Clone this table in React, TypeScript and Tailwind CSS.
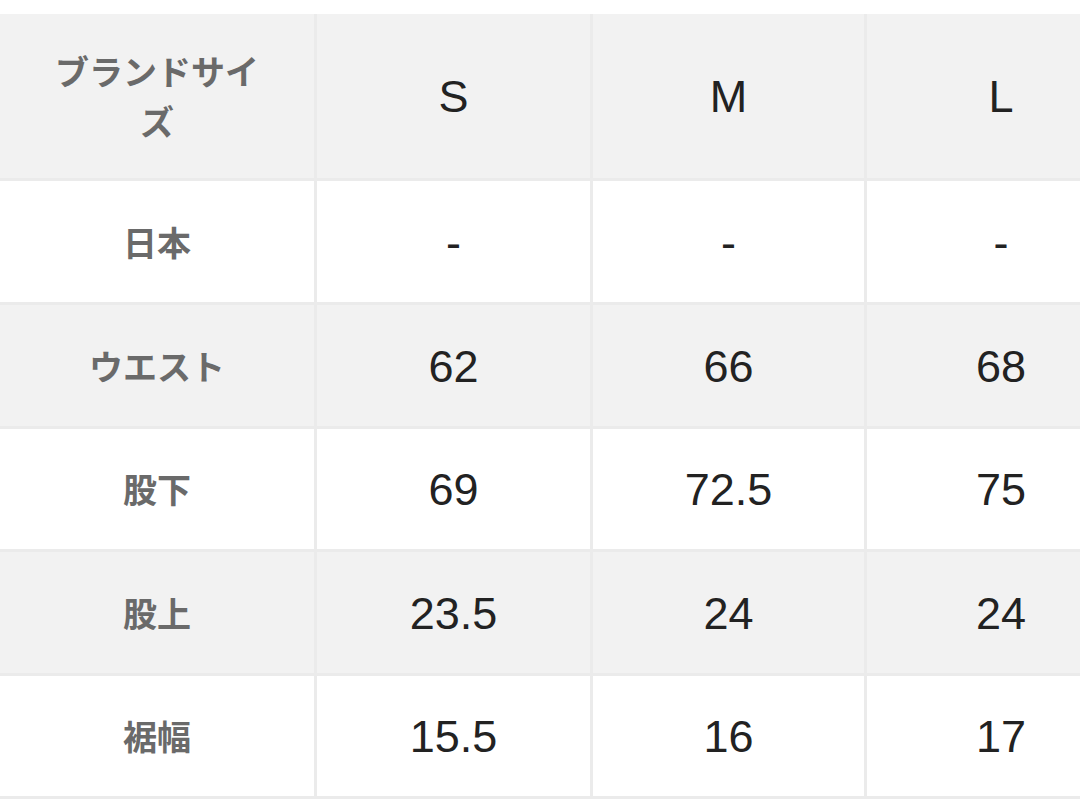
import React from "react";

interface SizeRow {
  label: string;
  values: string[];
  shaded: boolean;
  height: string;
}

const sizes = ["S", "M", "L"];

const rows: SizeRow[] = [
  { label: "日本", values: ["-", "-", "-"], shaded: false, height: "h-[121px]" },
  { label: "ウエスト", values: ["62", "66", "68"], shaded: true, height: "h-[121px]" },
  { label: "股下", values: ["69", "72.5", "75"], shaded: false, height: "h-[120px]" },
  { label: "股上", values: ["23.5", "24", "24"], shaded: true, height: "h-[121px]" },
  { label: "裾幅", values: ["15.5", "16", "17"], shaded: false, height: "h-[120px]" },
];

const labelFont = {
  fontFamily: '"Noto Sans CJK JP", "Noto Sans", sans-serif',
};
const valueFont = {
  fontFamily: '"Liberation Sans", Arial, sans-serif',
};

const LabelCell: React.FC<{ text: string; shaded: boolean; height: string }> = ({
  text,
  shaded,
  height,
}) => (
  <div
    className={
      "flex items-center justify-center px-[45px] text-center text-[34px] leading-[50px] font-bold text-[#6a6a6a] " +
      height +
      " " +
      (shaded ? "bg-[#f2f2f2]" : "bg-white")
    }
    style={labelFont}
  >
    {text}
  </div>
);

const ValueCell: React.FC<{ text: string; shaded: boolean; height: string }> = ({
  text,
  shaded,
  height,
}) => (
  <div
    className={
      "flex items-center justify-center pt-[2px] text-[45px] text-[#222222] " +
      height +
      " " +
      (shaded ? "bg-[#f2f2f2]" : "bg-white")
    }
    style={valueFont}
  >
    {text}
  </div>
);

export default function App() {
  return (
    <div className="w-[1080px] h-[812px] overflow-hidden bg-white pt-[14px]">
      <div className="grid w-[1135px] grid-cols-[314px_273px_271px_268px] gap-[3px] bg-[#ebebeb] pb-[3px]">
        <LabelCell text="ブランドサイズ" shaded={true} height="h-[164px]" />
        {sizes.map((s) => (
          <ValueCell key={s} text={s} shaded={true} height="h-[164px]" />
        ))}
        {rows.map((row) => (
          <React.Fragment key={row.label}>
            <LabelCell text={row.label} shaded={row.shaded} height={row.height} />
            {row.values.map((v, i) => (
              <ValueCell key={i} text={v} shaded={row.shaded} height={row.height} />
            ))}
          </React.Fragment>
        ))}
      </div>
    </div>
  );
}
